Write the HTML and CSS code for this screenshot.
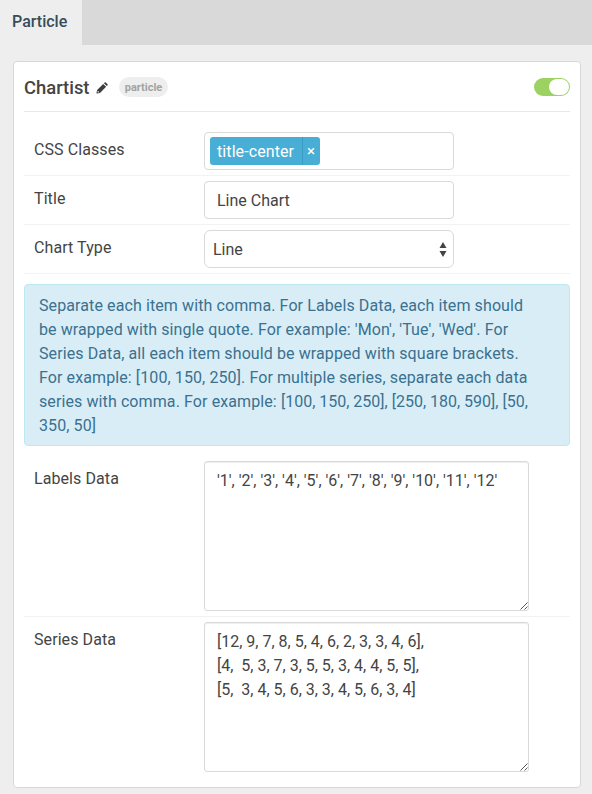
FILE: index.html
```html
<!DOCTYPE html>
<html lang="en">
<head>
<meta charset="utf-8">
<title>Particle</title>
<link rel="stylesheet" href="styles.css">
</head>
<body>
<nav class="tabs"><div class="tab">Particle</div></nav>
<main class="card">
  <header class="card-header">
    <h4 class="card-title">Chartist</h4>
    <svg class="pencil" width="12" height="12" viewBox="0 0 12 12"><path fill="#3d3d3d" fill-rule="evenodd" d="M.4 11.6 1.1 8 7.2 1.9 10.1 4.8 4 10.9ZM1.8 8.8 1.5 10.1 2 10.5 3.3 10.2ZM7.9 1.2 8.7.4Q9.2 0 9.8.5L11.5 2.2Q12 2.8 11.6 3.3L10.8 4.1Z"/></svg>
    <span class="badge">particle</span>
    <span class="toggle"><span class="knob"></span></span>
  </header>
  <div class="row">
    <label class="label">CSS Classes</label>
    <div class="control tags"><span class="tag"><span class="tag-text">title-center</span><span class="tag-close">×</span></span></div>
  </div>
  <div class="row">
    <label class="label" for="title">Title</label>
    <input class="control" id="title" type="text" value="Line Chart">
  </div>
  <div class="row">
    <label class="label">Chart Type</label>
    <div class="control select"><span>Line</span>
      <svg width="8" height="15" viewBox="0 0 8 15"><path fill="#444" d="M4 0 7.5 6H.5ZM4 15 .5 9h7Z"/></svg>
    </div>
  </div>
  <div class="alert">Separate each item with comma. For Labels Data, each item should<br>be wrapped with single quote. For example: 'Mon', 'Tue', 'Wed'. For<br>Series Data, all each item should be wrapped with square brackets.<br>For example: [100, 150, 250]. For multiple series, separate each data<br>series with comma. For example: <span class="numbers">[100, 150, 250], [250, 180, 590], [50,</span><br>350, 50]</div>
  <div class="row">
    <label class="label" for="labels">Labels Data</label>
    <div class="area">
      <textarea id="labels">'1', '2', '3', '4', '5', '6', '7', '8', '9', '10', '11', '12'</textarea>
      <svg class="grip" width="8" height="8" viewBox="0 0 8 8"><path stroke="#555" fill="none" d="M.5 7.5l7-7M4.500 7.500l3-3"/></svg>
    </div>
  </div>
  <div class="row last">
    <label class="label" for="series">Series Data</label>
    <div class="area">
      <textarea id="series">[12, 9, 7, 8, 5, 4, 6, 2, 3, 3, 4, 6],
[4,  5, 3, 7, 3, 5, 5, 3, 4, 4, 5, 5],
[5,  3, 4, 5, 6, 3, 3, 4, 5, 6, 3, 4]</textarea>
      <svg class="grip" width="8" height="8" viewBox="0 0 8 8"><path stroke="#555" fill="none" d="M.5 7.5l7-7M4.500 7.500l3-3"/></svg>
    </div>
  </div>
</main>
</body>
</html>
```
FILE: styles.css
```css
* { box-sizing: border-box; }
body {
  margin: 0;
  background: #eee;
  color: #444;
  font: 16px/24px Roboto, "Liberation Sans", sans-serif;
}
.tabs { height: 45px; background: #d9d9d9; display: flex; }
.tab {
  width: 82px;
  padding: 10px 0 0 12px;
  background: #eee;
  color: #354d59;
  font-weight: 500;
}
.card {
  margin: 16px 11px 0 13px;
  height: 727px;
  padding: 0 10px;
  background: #fff;
  border: 1px solid #d8d8d8;
  border-radius: 4px;
}
.card-header {
  display: flex;
  align-items: center;
  height: 50px;
  margin-bottom: 15px;
  border-bottom: 1px solid #e8e8e8;
}
.card-title { margin: 0; padding-top: 2px; font-size: 18.4px; font-weight: 500; width: 72px; white-space: nowrap; }
.pencil { margin-top: 2px; }
.badge {
  margin-left: 11px;
  width: 49px;
  height: 20px;
  border-radius: 10px;
  background: #eee;
  color: #a3a3a3;
  font-size: 11px;
  line-height: 21px;
  font-weight: 700;
  text-align: center;
}
.toggle {
  margin-left: auto;
  display: flex;
  justify-content: flex-end;
  width: 36px;
  height: 18px;
  padding: 1px;
  border-radius: 9px;
  background: #9bd262;
}
.knob { width: 20px; height: 16px; border-radius: 8px; background: #fff; }
.row {
  display: flex;
  align-items: flex-start;
  padding: 5px 0 5px 10px;
  border-bottom: 1px solid #f2f2f2;
}
.last { border-bottom: 0; }
.label { width: 170px; padding-top: 6px; letter-spacing: .08px; }
.control {
  width: 250px;
  height: 38px;
  padding: 0 12px;
  border: 1px solid #d9d9d9;
  border-radius: 4px;
  background: #fff;
  color: #444;
  font: inherit;
}
.tags { padding: 4px 5px; }
.tag {
  display: inline-flex;
  height: 28px;
  line-height: 30px;
  border-radius: 3px;
  background: #48aed6;
  color: #fff;
  overflow: hidden;
}
.tag-text { width: 93px; padding-left: 7px; border-right: 1px solid #3a9cc4; white-space: nowrap; letter-spacing: .09px; }
.tag-close { width: 16px; margin-right: 1px; text-align: center; font-size: 15px; line-height: 29px; }
.select { display: flex; align-items: center; justify-content: space-between; padding: 0 6px 0 8px; border-radius: 6px; }
.select span { padding-top: 2px; }
input.control { padding-top: 1px; }
.alert {
  height: 162px;
  margin: 10px 0;
  padding: 9px 14px 7px;
  border: 1px solid #bce8f1;
  border-radius: 4px;
  background: #d9edf7;
  color: #3a718f;
  white-space: nowrap;
  letter-spacing: .1px;
}
.numbers { letter-spacing: 0; }
.area { position: relative; width: 325px; height: 150px; }
.area textarea {
  display: block;
  width: 100%;
  height: 100%;
  padding: 7px 12px;
  border: 1px solid #d9d9d9;
  border-radius: 3px;
  box-shadow: inset 0 1px 1px rgba(0, 0, 0, .07);
  background: #fff;
  color: #444;
  font: inherit;
  resize: none;
  overflow: hidden;
}
.grip { position: absolute; right: 1px; bottom: 1px; }
```
